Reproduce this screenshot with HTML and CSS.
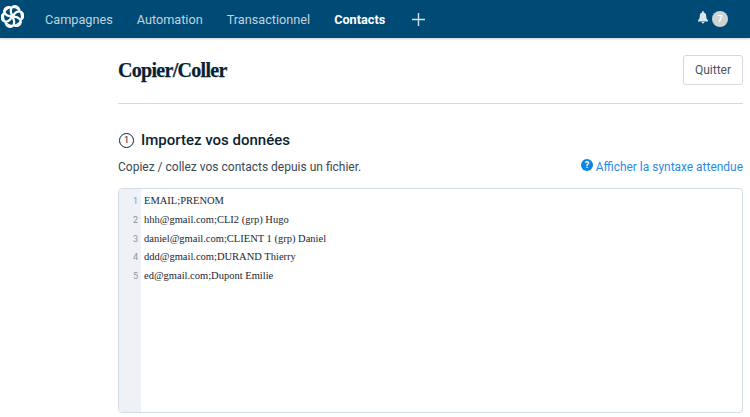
FILE: index.html
```html
<!DOCTYPE html>
<html lang="fr">
<head>
<meta charset="utf-8">
<title>Copier/Coller</title>
<link rel="stylesheet" href="styles.css">
</head>
<body>
<nav class="nav">
  <svg class="logo" viewBox="0 0 24 24" width="23" height="23" fill="none" stroke="#fff" stroke-width="2.4" stroke-linecap="round" stroke-linejoin="round">
    <circle cx="12" cy="12" r="9.6" stroke-width="1.6"/>
    <path d="M12 11C9.5 8 9.5 3.6 12.6 1.6C15.6.6 18.2 2.2 19 4.8"/>
    <path transform="rotate(60 12 12)" d="M12 11C9.5 8 9.5 3.6 12.6 1.6C15.6.6 18.2 2.2 19 4.8"/>
    <path transform="rotate(120 12 12)" d="M12 11C9.5 8 9.5 3.6 12.6 1.6C15.6.6 18.2 2.2 19 4.8"/>
    <path transform="rotate(180 12 12)" d="M12 11C9.5 8 9.5 3.6 12.6 1.6C15.6.6 18.2 2.2 19 4.8"/>
    <path transform="rotate(240 12 12)" d="M12 11C9.5 8 9.5 3.6 12.6 1.6C15.6.6 18.2 2.2 19 4.8"/>
    <path transform="rotate(300 12 12)" d="M12 11C9.5 8 9.5 3.6 12.6 1.6C15.6.6 18.2 2.2 19 4.8"/>
  </svg>
  <a class="nav-link">Campagnes</a>
  <a class="nav-link">Automation</a>
  <a class="nav-link">Transactionnel</a>
  <a class="nav-link nav-active">Contacts</a>
  <svg class="plus" viewBox="0 0 13 13" width="13" height="13" stroke="#d5e0e8" stroke-width="1.4"><path d="M6.5 0V13M0 6.5H13"/></svg>
  <div class="nav-right">
    <svg class="bell" viewBox="0 0 10 13" width="10" height="13" fill="#d9e6ee"><path d="M5 0a.9.9 0 0 1 .9.9v.7c1.6.4 2.3 1.8 2.3 3.5 0 2.2.7 3.3 1.8 4.4v.9H0v-.9c1.1-1.1 1.8-2.2 1.8-4.4 0-1.7.7-3.1 2.3-3.5V.9A.9.9 0 0 1 5 0zM3.6 11.1h2.8a1.4 1.4 0 0 1-2.8 0z"/></svg>
    <span class="badge">7</span>
  </div>
</nav>
<main class="main">
  <header class="head">
    <h1 class="title">Copier/Coller</h1>
    <button class="btn">Quitter</button>
  </header>
  <h2 class="step">
    <span class="step-num">1</span>
    Importez vos données
  </h2>
  <div class="row">
    <p class="desc">Copiez / collez vos contacts depuis un fichier.</p>
    <a class="help">
      <svg class="help-icon" viewBox="0 0 12 12" width="12" height="12"><circle cx="6" cy="6" r="6" fill="#0b85e0"/><text x="6" y="9.3" text-anchor="middle" class="help-q">?</text></svg>
      Afficher la syntaxe attendue
    </a>
  </div>
  <div class="editor">
    <div class="gutter">
      <div class="ln">1</div><div class="ln">2</div><div class="ln">3</div><div class="ln">4</div><div class="ln">5</div>
    </div>
    <div class="code">
      <div class="cl">EMAIL;PRENOM</div>
      <div class="cl">hhh@gmail.com;CLI2 (grp) Hugo</div>
      <div class="cl">daniel@gmail.com;CLIENT 1 (grp) Daniel</div>
      <div class="cl">ddd@gmail.com;DURAND Thierry</div>
      <div class="cl">ed@gmail.com;Dupont Emilie</div>
    </div>
  </div>
</main>
</body>
</html>
```
FILE: styles.css
```css
* { box-sizing: border-box; }
html, body { margin: 0; padding: 0; height: 100%; overflow: hidden; background: #fff; }
body { font-family: Roboto, "Noto Sans", sans-serif; color: #0b1f33; }
.nav {
  height: 38px;
  background: #004b75;
  box-shadow: 0 1px 2px rgba(0,0,0,.2);
  display: flex;
  align-items: center;
  padding-right: 22px;
}
.logo { margin-left: 1px; margin-top: -5px; flex: none; }
.nav-link { font-size: 12.7px; font-weight: 400; color: #c0d3df; margin-left: 24px; }
.nav-link:first-of-type { margin-left: 21px; }
.nav-active { color: #fff; font-weight: 700; }
.plus { margin-left: 27px; }
.nav-right { margin-left: auto; display: flex; align-items: center; gap: 4px; }
.bell { margin-top: -4px; }
.badge {
  width: 16px; height: 16px; border-radius: 50%;
  background: #d0d2d4; color: #fff; font-size: 9px; font-weight: 700;
  display: flex; align-items: center; justify-content: center;
}
.main { padding: 0 7px 0 118px; }
.head {
  height: 66px;
  border-bottom: 1px solid #d5dadf;
  display: flex;
  justify-content: space-between;
  padding-top: 17px;
}
.title { margin: 2px 0 0; font: 700 20px/26px "Liberation Serif", serif; letter-spacing: -.7px; color: #0b1f33; -webkit-text-stroke: .25px #0b1f33; }
.btn {
  width: 60px; height: 30px; padding: 0;
  background: #fff; border: 1px solid #d3dae2; border-radius: 3px;
  font: 400 12px Roboto, sans-serif; color: #4a5560;
}
.step {
  margin: 26px 0 0;
  font-size: 15px; font-weight: 500; line-height: 20px;
  color: #0b1f33;
  display: flex; align-items: center; gap: 7px;
}
.step-num {
  width: 15px; height: 15px; margin-left: 1px; border: 1px solid #0b1f33; border-radius: 50%;
  font-size: 9px; font-weight: 400;
  display: flex; align-items: center; justify-content: center;
}
.row { display: flex; justify-content: space-between; align-items: center; margin-top: 7px; height: 20px; }
.desc { margin: 0; font-size: 12px; color: #3a4754; }
.help { font-size: 11.95px; color: #2a8be6; display: flex; align-items: center; gap: 3px; }
.help-icon { margin-top: -4px; }
.help-q { font: 700 9px Roboto, sans-serif; fill: #fff; }
.editor {
  margin-top: 11px;
  height: 225px;
  border: 1px solid #d3dce6;
  border-radius: 4px;
  display: flex;
  overflow: hidden;
}
.gutter { width: 22px; background: #eef1f6; padding-top: 3px; flex: none; }
.ln { font: 400 9px/18.75px Roboto, sans-serif; color: #8d96a0; text-align: right; padding-right: 3px; }
.code { padding: 3px 0 0 3px; font: 400 10.5px/18.75px "Liberation Serif", serif; color: #1a2733; }
.cl { white-space: nowrap; }
```
